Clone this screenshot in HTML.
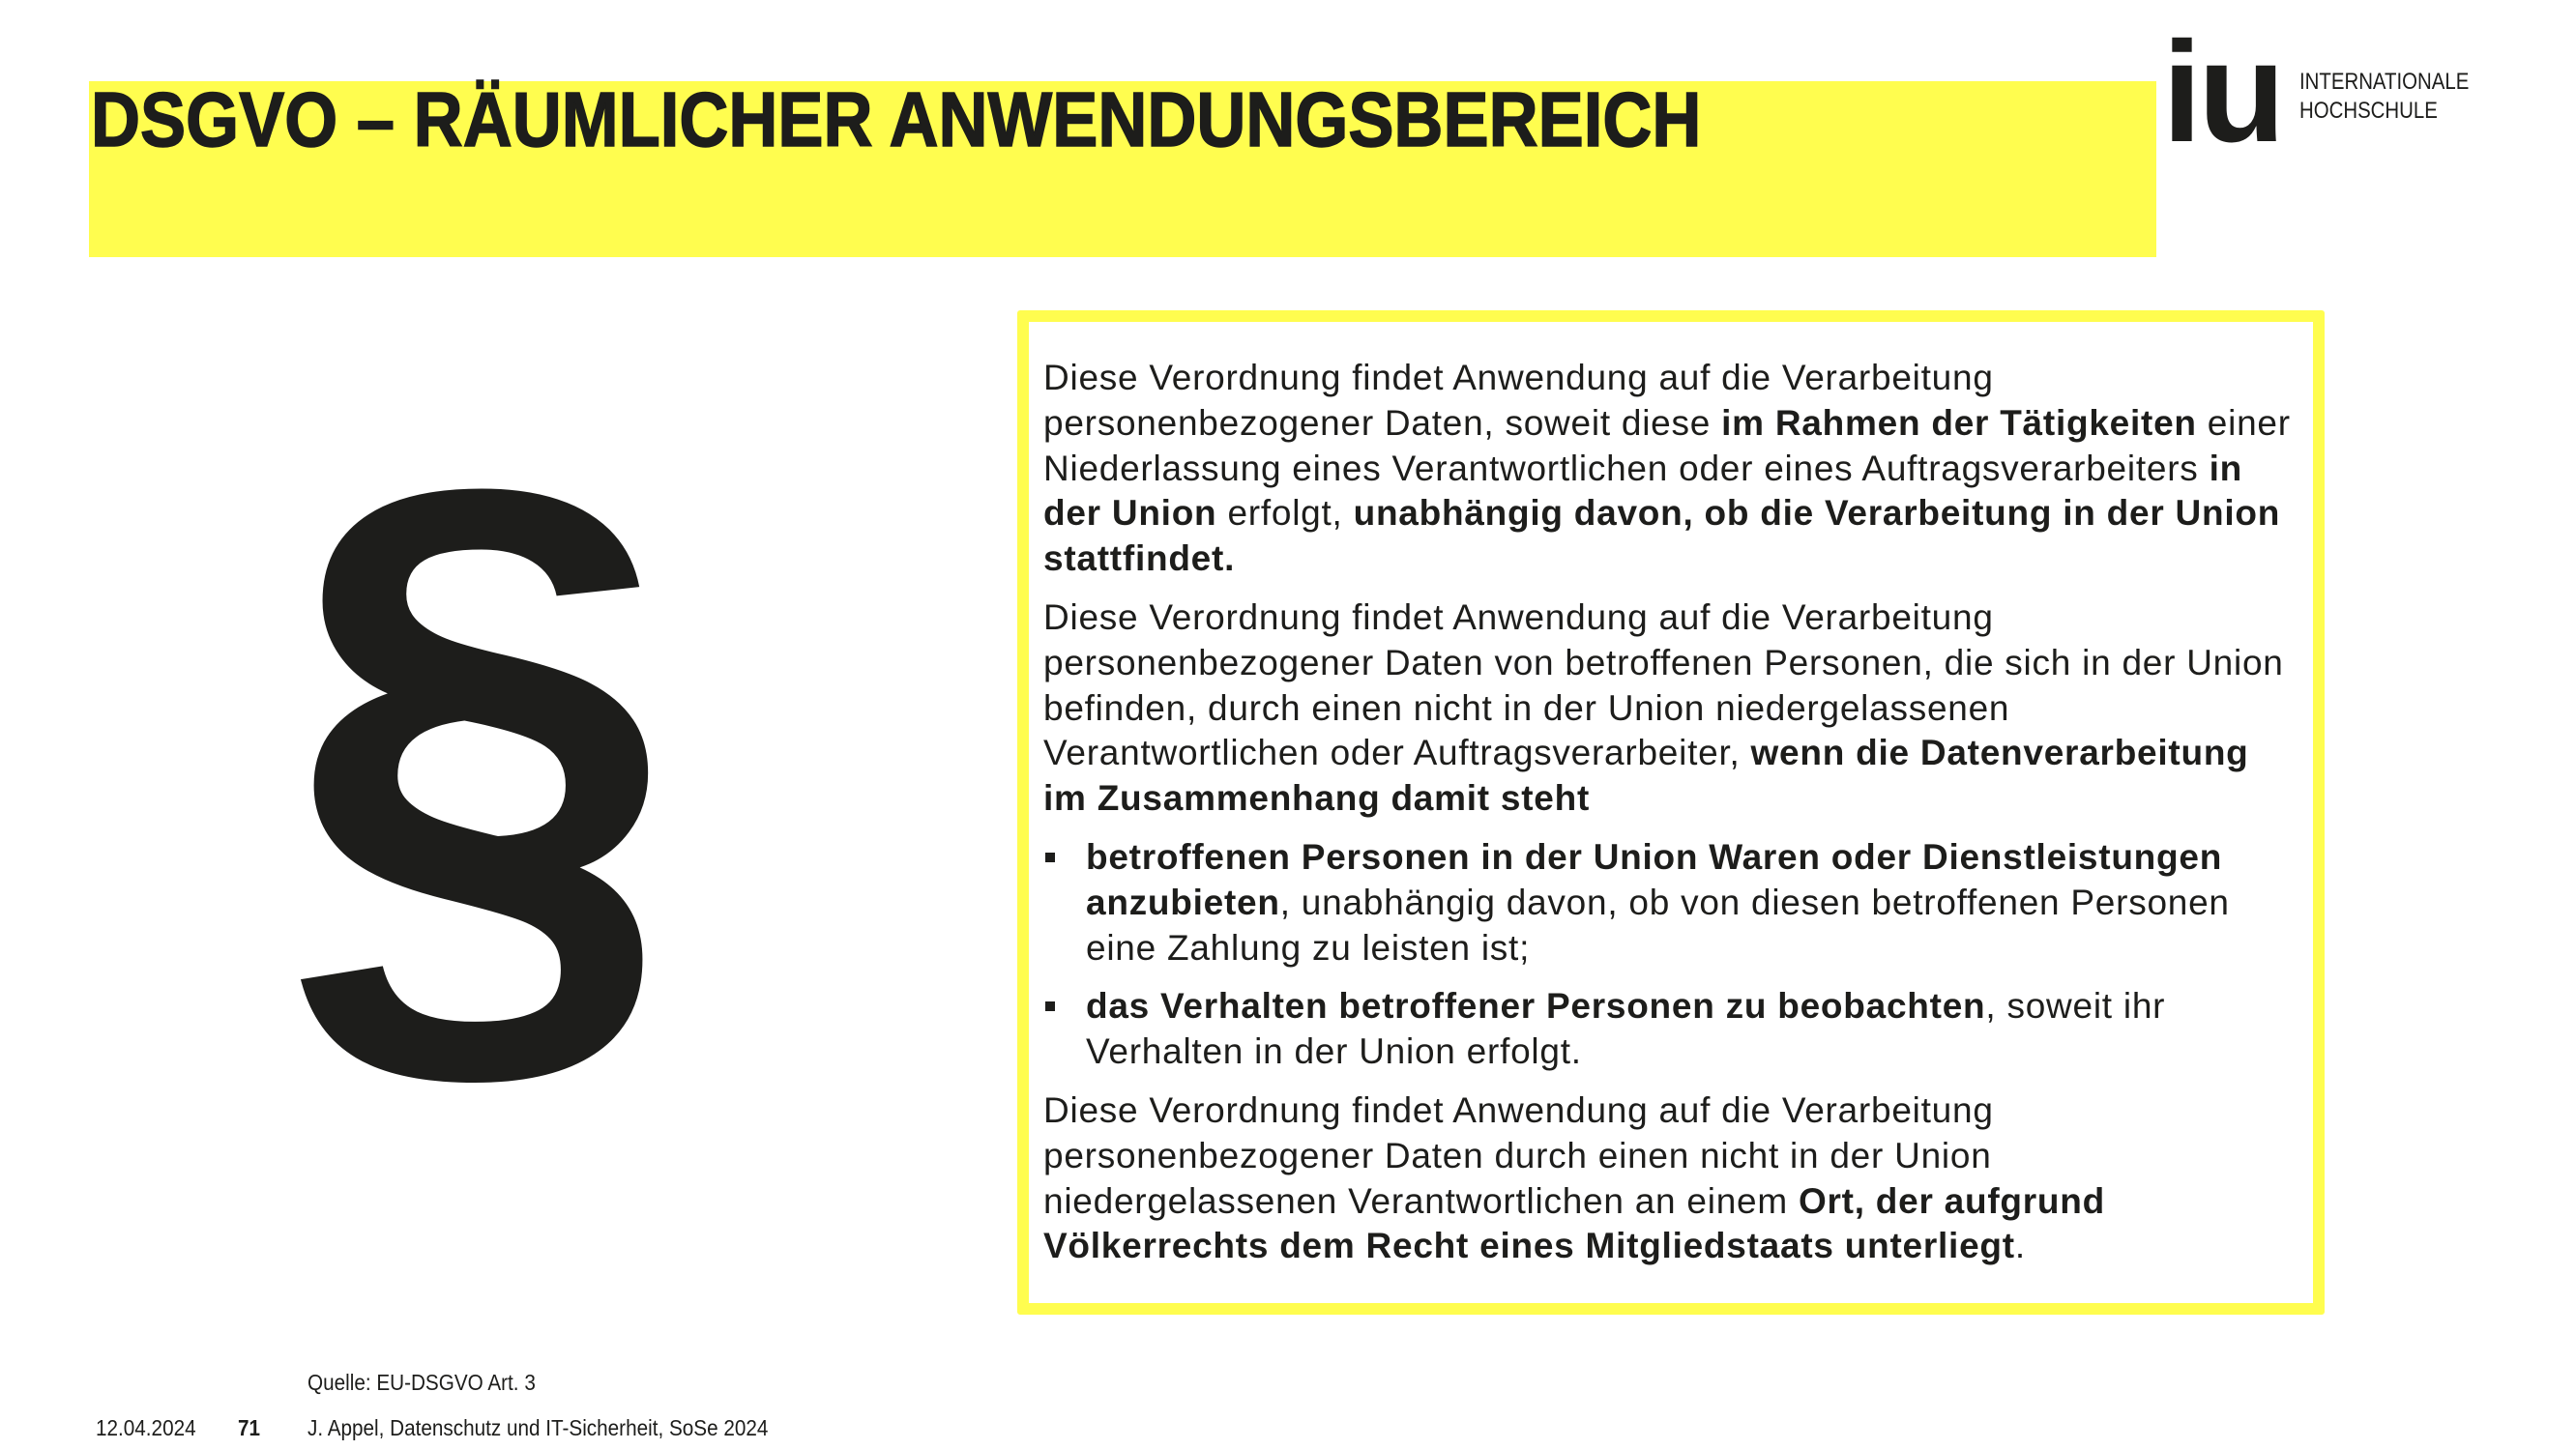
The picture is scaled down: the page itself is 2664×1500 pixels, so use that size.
<!DOCTYPE html>
<html><head><meta charset="utf-8"><style>
html,body{margin:0;padding:0;background:#fff;}
body{width:2664px;height:1500px;position:relative;overflow:hidden;font-family:"Liberation Sans",sans-serif;color:#1d1d1b;}
.bar{position:absolute;left:92px;top:84px;width:2138px;height:182px;background:#fffd4f;}
.title{position:absolute;left:94px;top:78px;font-weight:bold;font-size:80px;white-space:nowrap;transform:scaleX(0.883);transform-origin:left top;letter-spacing:0px;-webkit-text-stroke:1.5px #1d1d1b;}
.logo{position:absolute;left:2236px;top:22px;font-weight:bold;font-size:148px;line-height:1;letter-spacing:-4px;}
.lt{position:absolute;left:2378px;top:70px;font-size:24px;line-height:30px;transform:scaleX(0.85);transform-origin:left top;}
.box{position:absolute;left:1052px;top:321px;width:1328px;height:1015px;border:12px solid #fffd4f;border-radius:3px;}
.txt{position:absolute;left:1079px;top:368px;font-size:37px;line-height:46.8px;white-space:nowrap;letter-spacing:0.75px;}
.txt p{margin:0 0 14px 0;}
.bl{padding-left:44px;position:relative;}
.bl:before{content:"";position:absolute;left:2px;top:18px;width:10px;height:10px;background:#1d1d1b;}
.sec{position:absolute;left:292px;top:393px;font-size:760px;font-weight:bold;line-height:1;transform:scaleX(0.965);transform-origin:left top;}
.f{position:absolute;font-size:23px;white-space:nowrap;transform:scaleX(0.9);transform-origin:left top;}
</style></head><body>
<div class="bar"></div>
<div class="title">DSGVO – RÄUMLICHER ANWENDUNGSBEREICH</div>
<div class="logo">iu</div>
<div class="lt">INTERNATIONALE<br>HOCHSCHULE</div>
<div class="box"></div>
<div class="sec">§</div>
<div class="txt">
<p>Diese Verordnung findet Anwendung auf die Verarbeitung<br>personenbezogener Daten, soweit diese <b>im Rahmen der Tätigkeiten</b> einer<br>Niederlassung eines Verantwortlichen oder eines Auftragsverarbeiters <b>in<br>der Union</b> erfolgt, <b>unabhängig davon, ob die Verarbeitung in der Union<br>stattfindet.</b></p>
<p>Diese Verordnung findet Anwendung auf die Verarbeitung<br>personenbezogener Daten von betroffenen Personen, die sich in der Union<br>befinden, durch einen nicht in der Union niedergelassenen<br>Verantwortlichen oder Auftragsverarbeiter, <b>wenn die Datenverarbeitung<br>im Zusammenhang damit steht</b></p>
<p class="bl"><b>betroffenen Personen in der Union Waren oder Dienstleistungen<br>anzubieten</b>, unabhängig davon, ob von diesen betroffenen Personen<br>eine Zahlung zu leisten ist;</p>
<p class="bl"><b>das Verhalten betroffener Personen zu beobachten</b>, soweit ihr<br>Verhalten in der Union erfolgt.</p>
<p>Diese Verordnung findet Anwendung auf die Verarbeitung<br>personenbezogener Daten durch einen nicht in der Union<br>niedergelassenen Verantwortlichen an einem <b>Ort, der aufgrund<br>Völkerrechts dem Recht eines Mitgliedstaats unterliegt</b>.</p>
</div>
<div class="f" style="left:318px;top:1417px;">Quelle: EU-DSGVO Art. 3</div>
<div class="f" style="left:99px;top:1464px;">12.04.2024</div>
<div class="f" style="left:246px;top:1464px;font-weight:bold;">71</div>
<div class="f" style="left:318px;top:1464px;">J. Appel, Datenschutz und IT-Sicherheit, SoSe 2024</div>
</body></html>
